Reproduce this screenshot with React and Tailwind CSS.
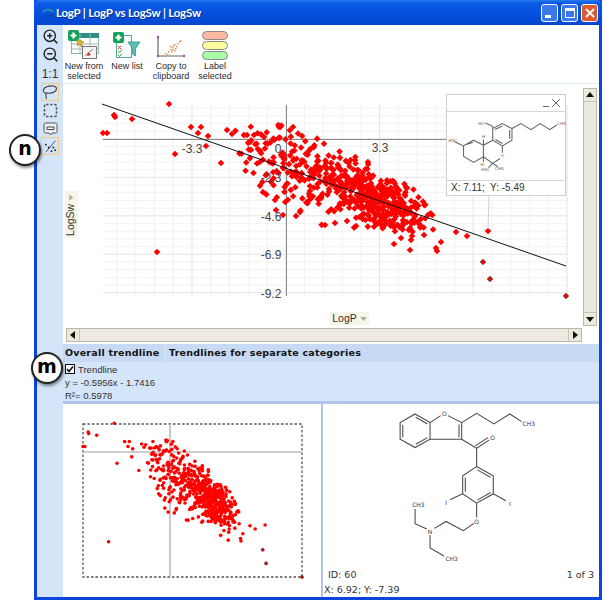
import React from "react";
import { ZoomIn, ZoomOut } from "lucide-react";

let seed = 12345;
const rnd = () => { seed = (seed * 1664525 + 1013904223) % 4294967296; return seed / 4294967296; };
const gauss = () => Math.sqrt(-2 * Math.log(rnd() + 1e-9)) * Math.cos(2 * Math.PI * rnd());
const C = 0.885, S = 0.465;
function cloud(n, cx, cy, a, b) {
  const out = [];
  while (out.length < n) {
    const u = gauss() * a, v = gauss() * b;
    const x = cx + u * C - v * S, y = cy + u * S + v * C;
    if (x > 232 && x < 440 && y > 125 && y < 232 && y - (x - 300) * 0.5 > 128) out.push([x, y]);
  }
  return out;
}
const outliers = [[169,104],[103,133],[107,133],[114,115],[115,117],[132,119],[191,127],[201,127],[198,133],[208,136],[206,146],[175,154],[221,163],[157,252],[227,130],[232,134],[247,135],[254,135],[264,137],[279,127],[293,127],[456,232],[467,236],[488,231],[394,244],[410,250],[437,251],[436,248],[441,242],[424,235],[401,238],[411,240],[412,236],[325,225],[335,223],[347,221],[356,226],[300,212],[276,210],[275,200],[296,216],[283,215]];
const edge = [[483,262],[490,279],[566,296]];
const pts = [...cloud(400, 374, 198, 32, 14), ...cloud(170, 296, 167, 34, 18), ...outliers];
const gx = Array.from({ length: 25 }, (_, i) => 117 + i * 18.75);
const gy = Array.from({ length: 25 }, (_, i) => 108 + i * 7.7);
const diamond = (x, y, r = 3.3) => `${x},${y - r} ${x + r},${y} ${x},${y + r} ${x - r},${y}`;
const mx = (x) => 83 + ((x - 103) / 463) * 219;
const my = (y) => 424 + ((y - 105) / 191) * 153;

function MainPlot() {
  return (
    <svg viewBox="63 84 520 242" width="520" height="242" className="block">
      {gy.map((y, i) => <line key={i} x1="103" x2="567" y1={y} y2={y} stroke={i % 5 === 4 ? "#e3e3e3" : "#f2f2f2"} />)}
      {gx.map((x, i) => <line key={i} x1={x} x2={x} y1="105" y2="296" stroke={(i + 1) % 5 === 0 ? "#e3e3e3" : "#f2f2f2"} />)}
      <line x1="103" x2="447" y1="139.5" y2="139.5" stroke="#8a8a8a" />
      <line x1="286.5" x2="286.5" y1="105" y2="296" stroke="#8a8a8a" />
      {pts.map(([x, y], i) => <polygon key={i} points={diamond(x, y)} fill="#ff0000" />)}
      {edge.map(([x, y], i) => <polygon key={i} points={diamond(x, y, 2.8)} fill="#f00000" stroke="#333" strokeWidth="0.7" />)}
      <line x1="102" y1="104" x2="566" y2="266" stroke="#111" strokeWidth="1" />
      <line x1="489" y1="196" x2="488" y2="229" stroke="#cfcfcf" />
      <g fontFamily="Liberation Sans, sans-serif" fontSize="12" fill="#444" textAnchor="middle">
        <text x="192" y="153">-3.3</text>
        <text x="380" y="152">3.3</text>
        <text x="278" y="153">0</text>
        <text x="271" y="182">-2.3</text>
        <text x="271" y="221">-4.6</text>
        <text x="271" y="259">-6.9</text>
        <text x="271" y="298">-9.2</text>
      </g>
    </svg>
  );
}

function MiniPlot() {
  return (
    <svg viewBox="63 404 258 193" width="258" height="193" className="block">
      <rect x="83" y="424" width="219" height="153" fill="none" stroke="#555" strokeWidth="1.3" strokeDasharray="2.5 2" />
      <line x1="83" x2="302" y1="452" y2="452" stroke="#bcbcbc" strokeWidth="1.6" />
      <line x1="170" x2="170" y1="424" y2="577" stroke="#bcbcbc" strokeWidth="1.6" />
      {pts.map(([x, y], i) => <circle key={i} cx={mx(x)} cy={my(y)} r="1.8" fill="#ff0000" />)}
      {edge.map(([x, y], i) => <circle key={i} cx={mx(x)} cy={my(y)} r="1.6" fill="#e00000" stroke="#444" strokeWidth="0.6" />)}
    </svg>
  );
}

function PopupMolecule() {
  return (
    <svg viewBox="438 335 360 208" width="120" height="69" className="block">
      <g fill="none" stroke="#666" strokeWidth="3.2">
        <path d="M553 368L575 378V420L604 437L633 420V385L604 370L575 385M582 388L604 377M626 389V416M583 418L604 430" />
        <path d="M633 385L660 370L690 388L718 370L747 388L768 374" />
        <path d="M575 420L547 435V470L517 487L487 468V437L517 420L547 435M492 434L515 427" />
        <path d="M460 425L486 437M604 437V458M597 475L575 490L547 470M575 490L562 503M575 490L590 500M547 435V418M547 470V486" />
      </g>
      <g fontFamily="Liberation Sans, sans-serif" fontSize="13" fill="#555" textAnchor="middle">
        <text x="541" y="373">HO</text>
        <text x="782" y="374">CH3</text>
        <text x="455" y="426">H3C</text>
        <text x="604" y="472">O</text>
        <text x="553" y="513">H3C</text>
        <text x="595" y="510">CH3</text>
        <text x="547" y="414">H</text>
        <text x="543" y="497">H</text>
      </g>
    </svg>
  );
}

function BigMolecule() {
  return (
    <svg viewBox="9 12 834 490" width="278" height="163" className="block">
      <g fill="none" stroke="#4a4a4a" strokeWidth="3.2">
        <path d="M285 42L330 68V118L285 143L240 118V68ZM287 52L322 72M322 113L287 133M248 75V112" />
        <path d="M330 68L362 47M384 47L425 68V118H330M417 74V112" />
        <path d="M425 68L470 40L522 72L570 42L605 65" />
        <path d="M425 118L470 145V200M470 145L508 120M466 138L504 113" />
        <path d="M470 200L520 228V282L470 310L428 282V228ZM472 210L512 232M512 278L472 301M436 234V276" />
        <path d="M428 282L390 300M520 282L558 303M470 310V353M462 371L430 393L378 365L343 386M320 388L285 372V328M330 406V445L372 469" />
      </g>
      <g fontFamily="DejaVu Sans, sans-serif" fontSize="18" fill="#3a3a3a" textAnchor="middle">
        <text x="373" y="48">O</text>
        <text x="518" y="121">O</text>
        <text x="627" y="79">CH3</text>
        <text x="378" y="316">I</text>
        <text x="570" y="318">I</text>
        <text x="470" y="372">O</text>
        <text x="330" y="402">N</text>
        <text x="295" y="322">CH3</text>
        <text x="395" y="484">CH3</text>
      </g>
    </svg>
  );
}

function NewFromIcon() {
  return (
    <svg viewBox="70 30 34 32" width="34" height="32" className="block">
      <rect x="74.5" y="35.5" width="27" height="20" fill="#fff" stroke="#8ba" />
      <rect x="74" y="35" width="28" height="5" fill="#2f8f86" />
      <path d="M74 46H102M74 51H102M83 36V55M93 36V55" stroke="#9fb8b4" fill="none" />
      <rect x="71" y="32" width="11" height="11" rx="2" fill="#13a05a" />
      <path d="M76.500 34.500V40.500M73.500 37.500H79.500" stroke="#fff" strokeWidth="2.2" />
      <path d="M80 41L87 44L84 45.500L86 48L84.500 49L82.500 46.500L80.500 48Z" fill="#d8b830" stroke="#8a7420" strokeWidth=".5" />
      <rect x="85.500" y="48.500" width="14" height="12" fill="#f4f4f4" stroke="#777" />
      <path d="M88 58L96 51" stroke="#888" />
      <path d="M91 54l3 3l-4 1z" fill="#e02020" />
    </svg>
  );
}

function NewListIcon() {
  return (
    <svg viewBox="116 30 30 30" width="30" height="30" className="block">
      <rect x="120.500" y="35.500" width="15" height="22" fill="#f6fbfa" stroke="#5aa9a0" />
      <path d="M122 46l3 3m0-3l-3 3" stroke="#d84030" strokeWidth="1" />
      <path d="M122 51l1.500 1.500l2.500-3M122 55l1.500 1.500l2.500-3" stroke="#40a040" strokeWidth="1" fill="none" />
      <path d="M132 42H144L139.500 48.500V56L136.500 54V48.500Z" fill="#5cc0b4" stroke="#2f8f86" strokeWidth=".8" />
      <rect x="117" y="32" width="11" height="11" rx="2" fill="#13a05a" />
      <path d="M122.500 34.500V40.500M119.500 37.500H125.500" stroke="#fff" strokeWidth="2.2" />
    </svg>
  );
}

function CopyIcon() {
  const d = [[164,52],[167,50],[170,48],[172,46],[174,44],[175,42],[177,45],[178,43],[176,47],[179,40],[181,38],[182,37],[173,48],[169,51],[176,41],[174,46],[172,43]];
  return (
    <svg viewBox="157 31 32 26" width="32" height="26" className="block">
      <path d="M160 34V53H186" stroke="#666" strokeWidth="1.2" fill="none" />
      <circle cx="160" cy="34" r="1.200" fill="#b040c0" />
      <circle cx="186" cy="53" r="1.200" fill="#b040c0" />
      <circle cx="160" cy="53" r="1.200" fill="#b040c0" />
      {d.map(([x, y], i) => <rect key={i} x={x} y={y} width="1.400" height="1.400" fill="#d98a50" />)}
    </svg>
  );
}

function LabelIcon() {
  return (
    <div className="flex flex-col gap-[1px] w-[26px]">
      <div className="h-[9px] rounded-[5px] bg-[#fcb8a0] border border-[#8a8a8a]"></div>
      <div className="h-[9px] rounded-[5px] bg-[#fdfd9f] border border-[#8a8a8a]"></div>
      <div className="h-[9px] rounded-[5px] bg-[#a8fca8] border border-[#8a8a8a]"></div>
    </div>
  );
}

function ToolButton({ w, icon, label }) {
  return (
    <div className={`flex flex-col items-center ${w}`}>
      <div className="h-[35px] flex items-end justify-center">{icon}</div>
      <div className="mt-[2px] text-center text-[9px] leading-[9.5px] text-[#2a2a2a] font-['Liberation_Sans',sans-serif]">{label}</div>
    </div>
  );
}

function WinBtn({ bg, children }) {
  return (
    <div className={`w-[17px] h-[18px] rounded-[3px] border border-white flex items-center justify-center ${bg}`}>{children}</div>
  );
}

function Arrow({ d }) {
  return (
    <svg viewBox="0 0 8 8" width="8" height="8"><path d={d} fill="#111" /></svg>
  );
}

function Callout({ pos, text }) {
  return (
    <div className={`absolute w-[32px] h-[32px] rounded-full bg-white border-2 border-[#222] shadow-[1px_2px_3px_rgba(0,0,0,.45)] flex items-center justify-center text-[19px] leading-none font-bold text-black font-['DejaVu_Sans',sans-serif] pb-[3px] ${pos}`}>{text}</div>
  );
}

export default function App() {
  return (
    <div className="relative w-[604px] h-[600px] bg-white overflow-hidden pl-[34px] pr-[2px]">
      <div className="w-full h-full flex flex-col bg-[#0a3fd8] border-x-[3px] border-b-[3px] border-[#0b45dc]">
        <div className="h-[25px] -mx-[3px] shrink-0 flex items-center pl-[8px] pr-[4px] rounded-t-[5px] bg-[linear-gradient(180deg,#2a7bf0_0%,#0a5be6_12%,#0550de_55%,#0447d0_100%)]">
          <svg viewBox="0 0 14 10" width="13" height="10">
            <path d="M1 4C4 0 10 1 12 4" stroke="#2fa98f" strokeWidth="1.5" fill="none" />
            <path d="M3 8C6 9 10 8 12 6" stroke="#0d3f9a" strokeWidth="1.5" fill="none" />
          </svg>
          <span className="ml-[1px] text-white text-[11.5px] tracking-[-.2px] font-bold font-['Lato',sans-serif] [text-shadow:1px_1px_0_#0a2f90]">LogP | LogP vs LogSw | LogSw</span>
          <div className="ml-auto flex gap-[3px]">
            <WinBtn bg="bg-[#3b78ea]"><div className="w-[6px] h-[3px] bg-white mt-[8px] -ml-[3px]"></div></WinBtn>
            <WinBtn bg="bg-[#3b78ea]"><div className="w-[10px] h-[10px] border border-white border-t-[3px]"></div></WinBtn>
            <WinBtn bg="bg-[#dc5a30]">
              <svg viewBox="0 0 10 10" width="10" height="10"><path d="M1 1L9 9M9 1L1 9" stroke="#fff" strokeWidth="2" /></svg>
            </WinBtn>
          </div>
        </div>

        <div className="flex-1 min-h-0 flex">
          <div className="w-[26px] shrink-0 bg-[#d4e4f9] flex flex-col items-center text-[#222]">
            <ZoomIn size={17} strokeWidth={2} className="mt-[3px]" color="#222" />
            <ZoomOut size={17} strokeWidth={2} className="mt-[1px]" color="#222" />
            <div className="mt-[4px] h-[14px] text-[12px] leading-[14px] font-['Liberation_Sans',sans-serif] text-[#333]">1:1</div>
            <div className="mt-[2px] w-[18px] h-[18px] border border-[#f3cd84] flex items-center justify-center">
              <svg viewBox="0 0 16 16" width="16" height="16"><path d="M1.500 6C1.500 3 7 1.500 11 2C15.500 2.500 15.500 6 12 8C9 10 5 9 3.500 9C2 9 1 7.500 1.500 6ZM4 9C3 11 5 12 4 15" fill="none" stroke="#444" strokeWidth="1.100" /></svg>
            </div>
            <div className="mt-[2px]">
              <svg viewBox="0 0 15 15" width="15" height="15"><rect x="1.500" y="1.500" width="12" height="12" rx="1.500" fill="none" stroke="#555" strokeWidth="1.600" strokeDasharray="2.500 1.600" /></svg>
            </div>
            <div className="mt-[4px]">
              <svg viewBox="0 0 15 15" width="15" height="15"><path d="M2.500 1H12.500C13.500 1 14 1.500 14 2.500V9.500C14 10.500 13.500 11 12.500 11H9L7.500 13L6 11H2.500C1.500 11 1 10.500 1 9.500V2.500C1 1.500 1.500 1 2.500 1Z" fill="#eee" stroke="#555" /><path d="M4 5H11V7.500H4Z" fill="#fff" stroke="#444" /></svg>
            </div>
            <div className="mt-[0px] w-[18px] h-[18px] border border-[#f3cd84] flex items-center justify-center">
              <svg viewBox="0 0 16 16" width="15" height="15"><path d="M3 14L13 2" stroke="#444" /><circle cx="3" cy="6" r="1" fill="#222" /><circle cx="6" cy="9" r="1" fill="#222" /><circle cx="11" cy="9" r="1" fill="#222" /><circle cx="13" cy="12" r="1" fill="#222" /><circle cx="9" cy="13" r="1" fill="#222" /></svg>
            </div>
          </div>

          <div className="flex-1 min-w-0 flex flex-col bg-white">
            <div className="h-[319px] shrink-0 flex flex-col">
              <div className="h-[59px] shrink-0 flex border-b border-[#e6effb]">
                <ToolButton w="w-[42px]" icon={<NewFromIcon />} label={<>New from<br />selected</>} />
                <ToolButton w="w-[44px]" icon={<NewListIcon />} label="New list" />
                <ToolButton w="w-[44px]" icon={<CopyIcon />} label={<>Copy to<br />clipboard</>} />
                <ToolButton w="w-[44px]" icon={<LabelIcon />} label={<>Label<br />selected</>} />
              </div>
              <div className="flex-1 min-h-0 flex">
                <div className="w-[520px] shrink-0 flex flex-col">
                  <div className="relative w-[520px] h-[243px] shrink-0">
                    <MainPlot />
                    <div className="absolute left-[383px] top-[10px] w-[120px] h-[102px] bg-white border border-[#cfcfcf] flex flex-col">
                      <div className="h-[17px] shrink-0 border-b border-[#d6d6d6] flex items-center justify-end gap-[2px] pr-[4px]">
                        <div className="w-[6px] h-[1px] bg-[#666] mt-[7px]"></div>
                        <svg viewBox="0 0 10 10" width="10" height="10"><path d="M1 1L9 9M9 1L1 9" stroke="#666" /></svg>
                      </div>
                      <div className="flex-1 min-h-0"><PopupMolecule /></div>
                      <div className="h-[15px] shrink-0 border-t border-[#d6d6d6] pl-[4px] text-[10px] leading-[14px] text-[#333] font-['Liberation_Sans',sans-serif]">X: 7.11;&nbsp; Y: -5.49</div>
                    </div>
                    <div className="absolute left-[267px] top-[228px] w-[39px] h-[13px] bg-[#f7f5e6] flex items-center justify-center gap-[3px] text-[10.5px] text-[#333] font-['Liberation_Sans',sans-serif]">
                      LogP
                      <svg viewBox="0 0 8 5" width="7" height="4"><path d="M0 0H8L4 5Z" fill="#aaa" /></svg>
                    </div>
                    <div className="absolute left-[2px] top-[107px] w-[13px] h-[47px] bg-[#f7f5e6] flex items-center justify-center">
                      <div className="-rotate-90 whitespace-nowrap flex items-center gap-[3px] text-[10.5px] text-[#333] font-['Liberation_Sans',sans-serif]">
                        LogSw
                        <svg viewBox="0 0 8 5" width="7" height="4"><path d="M0 0H8L4 5Z" fill="#aaa" /></svg>
                      </div>
                    </div>
                  </div>
                  <div className="ml-[3px] w-[516px] h-[14px] mt-[1px] flex items-stretch bg-[#ece9e2] border border-[#bdb9a8]">
                    <div className="w-[13px] bg-[#eceadb] border-r border-[#c9c6b6] flex items-center justify-center"><Arrow d="M6 0V8L1 4Z" /></div>
                    <div className="flex-1"></div>
                    <div className="w-[13px] bg-[#eceadb] border-l border-[#c9c6b6] flex items-center justify-center"><Arrow d="M2 0V8L7 4Z" /></div>
                  </div>
                </div>
                <div className="mt-[4px] w-[14px] h-[238px] flex flex-col bg-[#ece9e2] border border-[#bdb9a8]">
                  <div className="h-[13px] bg-[#eceadb] border-b border-[#c9c6b6] flex items-center justify-center"><Arrow d="M0 6H8L4 1Z" /></div>
                  <div className="flex-1"></div>
                  <div className="h-[13px] bg-[#eceadb] border-t border-[#c9c6b6] flex items-center justify-center"><Arrow d="M0 2H8L4 7Z" /></div>
                </div>
              </div>
            </div>

            <div className="h-[60px] shrink-0 flex flex-col bg-[#d4e4f9] border-b-[3px] border-[#b0c4ec]">
              <div className="h-[18px] shrink-0 flex bg-[#c8daf3] text-[9.5px] leading-[18px] font-bold text-[#111] tracking-[.22px] font-['DejaVu_Sans',sans-serif]">
                <div className="w-[103px] pl-[2px] border-r border-[#d8e5f8]">Overall trendline</div>
                <div className="pl-[3px]">Trendlines for separate categories</div>
              </div>
              <div className="pl-[2px] flex flex-col text-[9.5px] leading-[13px] text-[#333] font-['Liberation_Sans',sans-serif]">
                <div className="flex items-center gap-[3px] h-[14px]">
                  <div className="w-[10px] h-[10px] border border-[#111] bg-white flex items-center justify-center">
                    <svg viewBox="0 0 8 8" width="8" height="8"><path d="M1 4L3 6.500L7 1.500" stroke="#111" strokeWidth="1.6" fill="none" /></svg>
                  </div>
                  Trendline
                </div>
                <div>y = -0.5956x - 1.7416</div>
                <div>R²= 0.5978</div>
              </div>
            </div>

            <div className="flex-1 min-h-0 flex bg-white">
              <div className="w-[258px] shrink-0"><MiniPlot /></div>
              <div className="w-[2px] shrink-0 bg-[#b0c4ec]"></div>
              <div className="flex-1 min-w-0 flex flex-col font-['DejaVu_Sans',sans-serif] text-[#333] text-[9.5px]">
                <BigMolecule />
                <div className="flex justify-between pl-[5px] pr-[5px] leading-[15px] h-[15px]"><span>ID: 60</span><span>1 of 3</span></div>
                <div className="pl-[1px] leading-[15px]">X: 6.92; Y: -7.39</div>
              </div>
            </div>
          </div>
        </div>
      </div>
      <Callout pos="left-[9px] top-[134px]" text="n" />
      <Callout pos="left-[31px] top-[352px]" text="m" />
    </div>
  );
}
